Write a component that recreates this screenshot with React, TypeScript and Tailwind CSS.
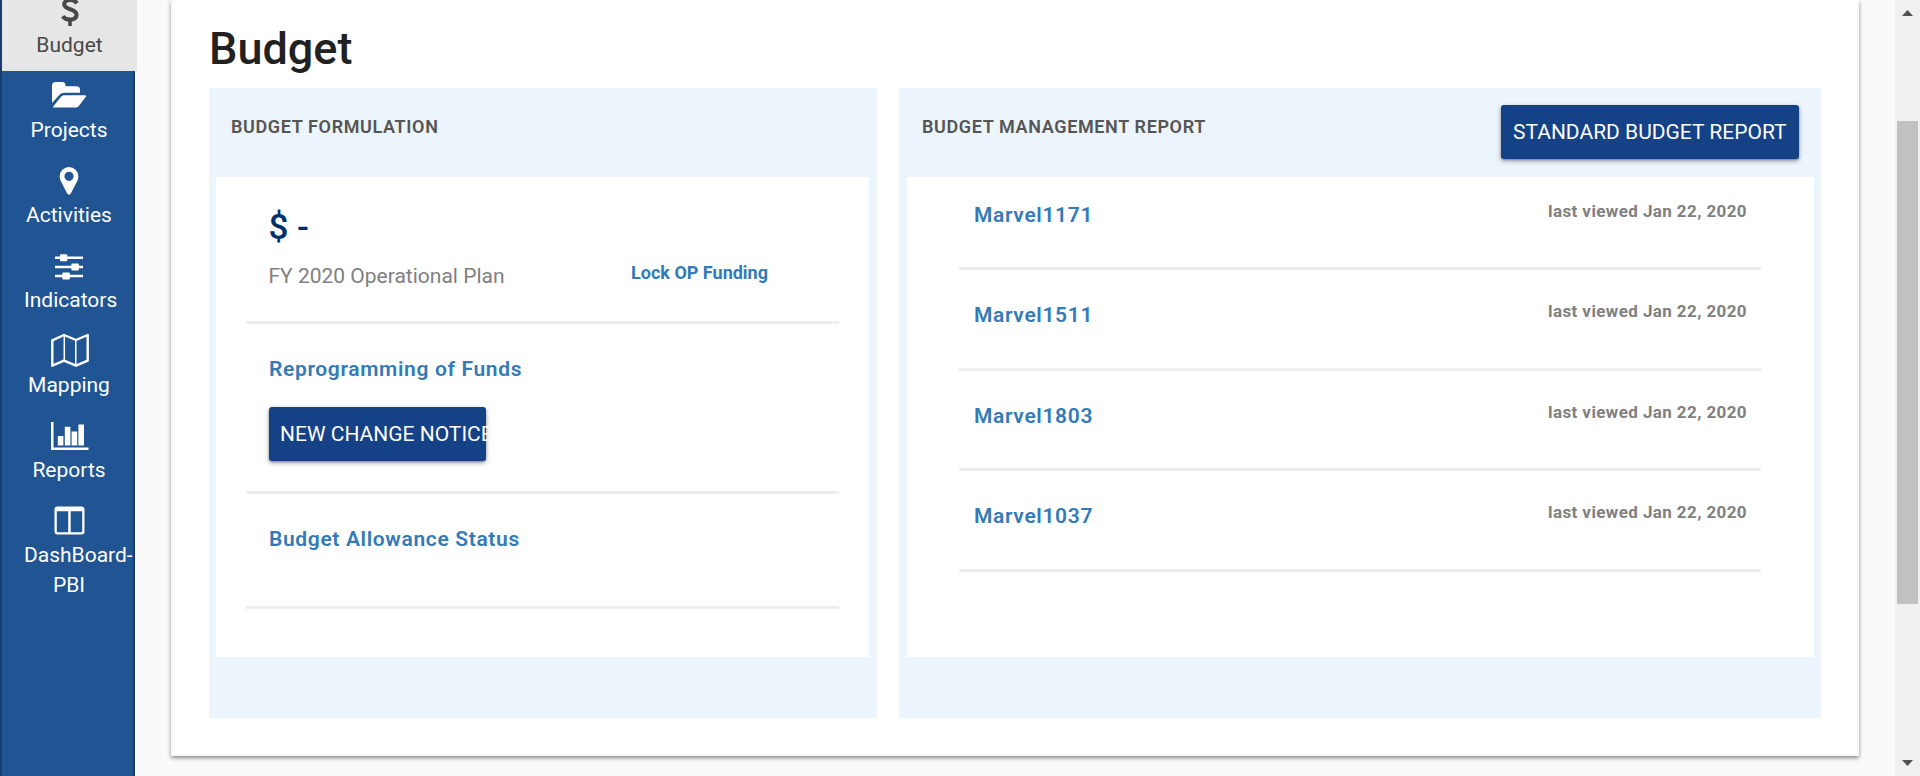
import React from "react";

type Item = { label: string; icon: React.ReactNode };

const items: Item[] = [
  {
    label: "Projects",
    icon: (
      <svg width="36" height="28" viewBox="0 0 36 28" fill="currentColor">
        <path d="M1 22V4.500a3.500 3.500 0 0 1 3.500-3.500h6.500a3.500 3.500 0 0 1 3.500 3.500v.8h11a3.500 3.500 0 0 1 3.500 3.500v3H13.500c-2 0-3.800.8-5.200 2.300L1 22z" />
        <path d="M2.800 26.500c-.8 0-1-.6-.4-1.300l7.400-9.300c.9-1 2.400-1.700 3.700-1.700h20.300c1.300 0 1.700.8.9 1.800l-7 8.900c-.8 1-2.300 1.600-3.600 1.600z" />
      </svg>
    ),
  },
  {
    label: "Activities",
    icon: (
      <svg className="mt-px" width="20" height="30" viewBox="0 0 20 30" fill="currentColor" fillRule="evenodd">
        <path d="M10 1a9.300 9.300 0 0 1 9.300 9.400c0 1.400-.2 2.800-.8 4L11.800 27.600a2 2 0 0 1-3.600 0L1.500 14.400c-.6-1.200-.8-2.600-.8-4A9.300 9.300 0 0 1 10 1zm0 4.700a4.600 4.600 0 1 0 0 9.200 4.600 4.600 0 0 0 0-9.200z" />
      </svg>
    ),
  },
  {
    label: "Indicators",
    icon: (
      <svg className="mt-[3px]" width="28" height="26" viewBox="0 0 28 26" fill="currentColor">
        <path d="M0 2.500h28v2.500H0zM0 11.700h28v2.500H0zM0 20.800h28v2.500H0z" />
        <rect x="5" y="0.200" width="7.300" height="7" rx="1" />
        <rect x="16.400" y="9.400" width="7.500" height="7" rx="1" />
        <rect x="7.400" y="18.500" width="7.500" height="7" rx="1" />
      </svg>
    ),
  },
  {
    label: "Mapping",
    icon: (
      <svg className="ml-px" width="38" height="34" viewBox="0 0 38 34" fill="none" stroke="currentColor">
        <path d="M1.300 7.300L13 2l12 5 11.700-5v25.700L25 32.700l-12-5-11.700 5z" strokeWidth="2.400" strokeLinejoin="round" />
        <path d="M13.300 2v25.700M24.800 7v25.700" strokeWidth="1.500" />
      </svg>
    ),
  },
  {
    label: "Reports",
    icon: (
      <svg className="mt-px ml-px" width="38" height="28" viewBox="0 0 38 28" fill="currentColor">
        <path d="M0 0h2.500v25.500H37.500V28H0zM6.800 14h5.600v9.600H6.800zM13.800 4.700h5.600v18.900h-5.600zM20.600 9.500h5.600v14.100h-5.600zM27.400 2.600H33v21h-5.600z" />
      </svg>
    ),
  },
  {
    label: "DashBoard-PBI",
    icon: (
      <svg width="31" height="29" viewBox="0 0 31 29" fill="currentColor" fillRule="evenodd">
        <path d="M3.500.5h24a3 3 0 0 1 3 3v22a3 3 0 0 1-3 3h-24a3 3 0 0 1-3-3v-22a3 3 0 0 1 3-3zM2.800 5.300v20.200l.7.800h10.700v-21zM16.700 5.300v21h10.800l.7-.8V5.300z" />
      </svg>
    ),
  },
];

const reports = ["Marvel1171", "Marvel1511", "Marvel1803", "Marvel1037"];

const btn =
  "h-[54px] rounded-[3px] bg-[#154187] pt-[2px] text-left text-[21px] whitespace-nowrap text-white shadow-[0_2px_5px_rgba(0,0,0,0.35),0_1px_2px_rgba(0,0,0,0.25)]";

const link = "text-[21px] leading-[30px] font-semibold tracking-[0.65px] text-[#337ab7]";

const heading = "pt-[26px] text-[18px] leading-[26px] font-semibold tracking-[0.63px] text-[#555]";

export default function App() {
  return (
    <div className="flex h-[776px] w-[1920px] overflow-hidden bg-[#fafafa] font-['Roboto',sans-serif]">
      <nav className="h-full w-[135px] shrink-0 border-x-2 border-[#193c6c] bg-[#205493] text-center text-[21px] leading-[30px] text-white">
        <div className="flex h-[71px] w-[135px] flex-col items-center bg-[#e6e6e6] text-[#484848]">
          <div className="flex h-[30px] w-[134px] items-end justify-center pb-[4px]">
            <svg className="shrink-0" width="18" height="32" viewBox="0 0 18 32" fill="none" stroke="currentColor" strokeWidth="4.200">
              <path d="M16 9.300C14.600 7.300 12 6 9.200 6 5.600 6 3.200 7.800 3.200 10.300c0 6 12.400 3.900 12.400 10.500 0 3-2.600 4.900-6.500 4.900-3.200 0-5.800-1.300-7.400-3.400" />
              <path d="M9 0v6M9 26v6" strokeWidth="3.600" />
            </svg>
          </div>
          <span>Budget</span>
        </div>
        {items.map((it) => (
          <div key={it.label} className="flex h-[85px] w-[134px] flex-col items-center">
            <div className="flex h-[44px] shrink-0 items-center justify-center pt-1">{it.icon}</div>
            <span className="w-[90px]">{it.label}</span>
          </div>
        ))}
      </nav>

      <main className="ml-[36px] h-[756px] w-[1688px] shrink-0 border-x-2 border-b-2 border-[#f8f8f8] bg-white px-[36px] shadow-[0_2px_4px_rgba(0,0,0,0.45)]">
        <h1 className="h-[88px] pt-[21px] text-[45px] leading-[56px] font-medium text-[#212121]">Budget</h1>
        <div className="flex gap-[22px]">
          <section className="h-[630px] w-[668px] bg-[#ecf4fc] pr-2 pl-[7px]">
            <div className="h-[89px] pl-[15px]">
              <h2 className={heading}>BUDGET FORMULATION</h2>
            </div>
            <div className="h-[480px] bg-white pr-[30px] pl-[30px]">
              <div className="flex h-[147px] justify-between border-b-[3px] border-[#eee] pr-[71px] pl-[22.500px]">
                <div>
                  <div className="pt-[30px] text-[35px] leading-[42px] font-medium text-[#002f6c]">$ -</div>
                  <div className="pt-[12px] text-[21px] leading-[30px] text-[#808080]">FY 2020 Operational Plan</div>
                </div>
                <div className="pt-[83px] text-[18px] leading-[26px] font-bold text-[#337ab7]">Lock OP Funding</div>
              </div>
              <div className="h-[170px] border-b-[3px] border-[#eee] pt-[30px] pl-[23px]">
                <div className={link}>Reprogramming of Funds</div>
                <button className={btn + " mt-[23px] block w-[217px] pl-[11px]"}>NEW CHANGE NOTICE</button>
              </div>
              <div className="h-[115px] border-b-[3px] border-[#eee] pt-[30px] pl-[23px]">
                <div className={link}>Budget Allowance Status</div>
              </div>
            </div>
          </section>

          <section className="h-[630px] w-[922px] bg-[#ecf4fc] pr-[7px] pl-2">
            <div className="flex h-[89px] justify-between pr-[15px] pl-[15px]">
              <h2 className={heading}>BUDGET MANAGEMENT REPORT</h2>
              <button className={btn + " mt-[17px] w-[298px] pl-[12px]"}>STANDARD BUDGET REPORT</button>
            </div>
            <div className="h-[480px] bg-white pr-[53px] pl-[52px]">
              {reports.map((r, i) => (
                <div
                  key={r}
                  className={
                    (i === 0 ? "h-[93px] pt-[23px]" : "h-[100.700px] pt-[30px]") +
                    " flex justify-between border-b-[3px] border-[#eee] pr-[14px] pl-[15px]"
                  }
                >
                  <span className={link}>{r}</span>
                  <span className="text-[17px] leading-[22px] font-bold tracking-[0.4px] text-[#808080]">last viewed Jan 22, 2020</span>
                </div>
              ))}
            </div>
          </section>
        </div>
      </main>

      <div className="ml-auto flex h-full w-[25px] flex-col items-center bg-[#f0f0f0]">
        <div className="flex h-[121px] items-start pt-[10px]">
          <svg width="11" height="6" viewBox="0 0 11 6" fill="#505050">
            <path d="M5.500 0L11 6H0z" />
          </svg>
        </div>
        <div className="h-[483px] w-[21px] bg-[#c1c1c1]" />
        <svg className="mt-auto mb-[10px]" width="11" height="6" viewBox="0 0 11 6" fill="#505050">
          <path d="M5.500 6L11 0H0z" />
        </svg>
      </div>
    </div>
  );
}
